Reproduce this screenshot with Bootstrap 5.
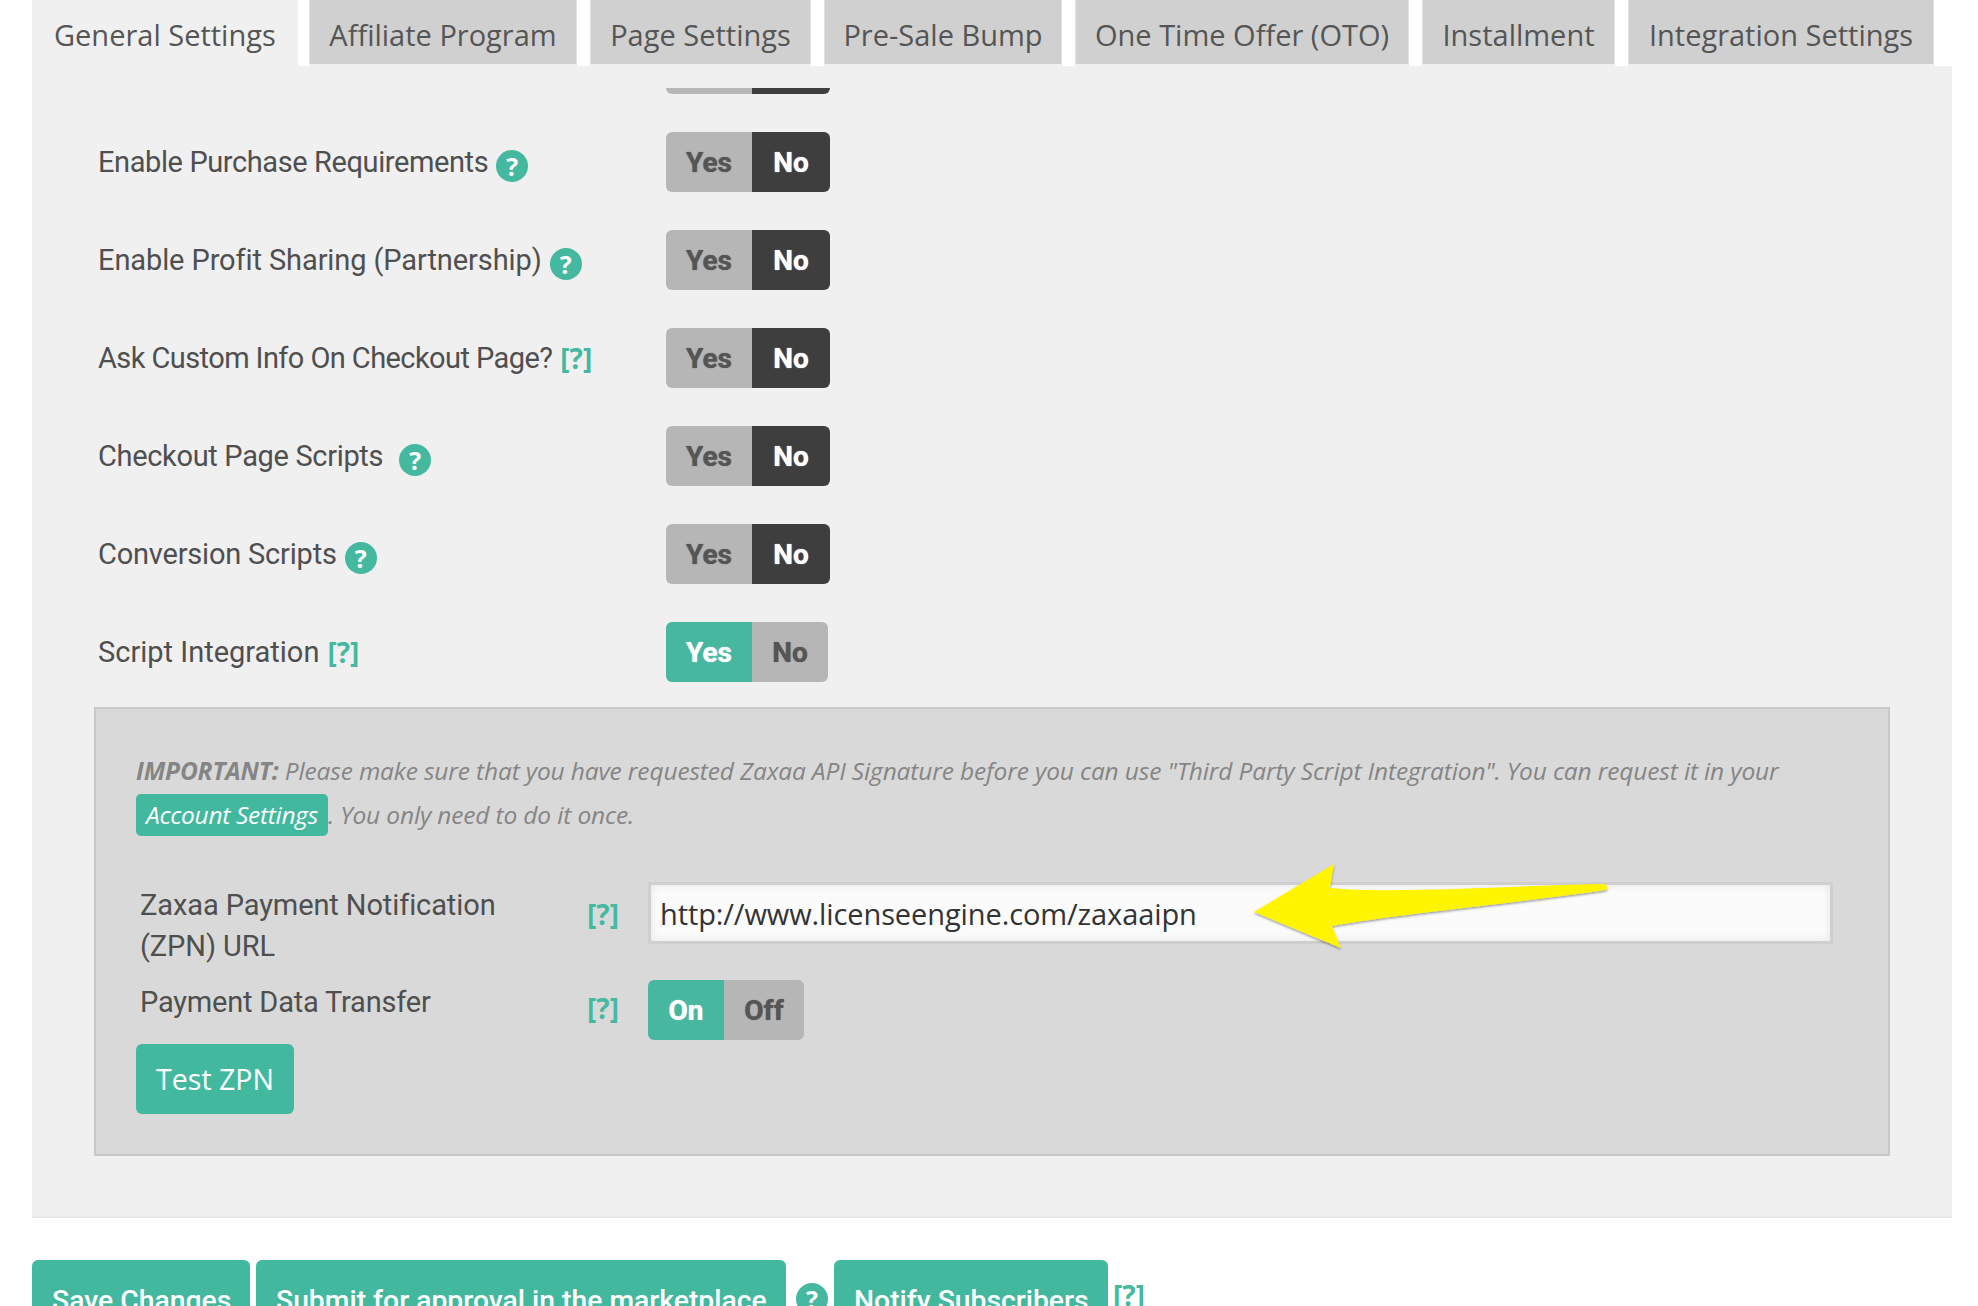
<!DOCTYPE html>
<html lang="en">
<head>
<meta charset="utf-8">
<title>Product settings</title>
<link href="https://cdn.jsdelivr.net/npm/bootstrap@5.3.0/dist/css/bootstrap.min.css" rel="stylesheet">
<style>
html,body{height:1306px;overflow:hidden;background:#fff}
body{font-family:"Roboto","Liberation Sans",sans-serif;color:#4f4f4f}
.sheet{margin-left:32px;width:1920px}
.tabbar{flex-wrap:nowrap;gap:13px;height:66px}
.tabbar .nav-link{height:66px;padding:17px 0 0;text-align:center;background:#d0d0d0;border-bottom:2px solid #f0f0f0;border-left:1px solid #e2e2e2;border-right:1px solid #e2e2e2;color:#555;font:400 29px/36px "Open Sans","Liberation Sans",sans-serif;border-radius:0;white-space:nowrap}
.tabbar .nav-link.active{background:#f0f0f0;border-color:#f0f0f0;padding-left:21px;text-align:left}
.tabbar .nav-item:first-child{margin-right:-2px}
.t0{width:266px}.t1{width:268px}.t2{width:221px}.t3{width:238px}.t4{width:334px}.t5{width:193px}.t6{width:306px}
.pane{background:#f0f0f0;border-bottom:2px solid #e8e8e8;padding:0 0 60px;height:1152px}
.capstrip{height:22px}
.cut{margin-left:634px;width:164px;height:6px;display:flex;border-radius:0 0 6px 6px;overflow:hidden;margin-bottom:38px}
.cut span:first-child{width:86px;background:#b6b6b6}
.cut span:last-child{width:78px;background:#3e3e3e}
.frow{height:60px;margin:0 0 38px 66px;display:flex;align-items:center}
.frow.lastrow{margin-bottom:25px}
.flabel{width:568px;font-size:29px;line-height:40px;display:flex;align-items:center;white-space:nowrap}
.ls1{letter-spacing:-.1px}.ls2{letter-spacing:-.2px}.ls3{letter-spacing:-.33px}.ls4{letter-spacing:-.4px}.ls6{letter-spacing:-.58px}
.tip{width:32px;height:32px;border-radius:50%;background:#45b8a0;color:#fff;font:700 25px/32px "Open Sans",sans-serif;text-align:center;display:inline-block;margin-top:8px;flex:none}
.qlink{color:#45b8a0;font:700 28px/36px "Open Sans",sans-serif;text-decoration:none}
.yn{height:60px;vertical-align:top}
.yn .btn{height:60px;margin:0!important;padding:0;border:0;border-radius:6px;font:700 28px/61px "Roboto",sans-serif;display:block;flex:none;text-shadow:0 0 1px currentColor}
.yn .btn:not(:last-child){border-top-right-radius:0;border-bottom-right-radius:0}
.yn .btn:not(:first-child){border-top-left-radius:0;border-bottom-left-radius:0}
.s-grey{background:#b6b6b6;color:#555}
.s-dark{background:#3e3e3e;color:#fff}
.s-teal{background:#48b79f;color:#fff}
.yn .btn.s-grey:hover{background:#b6b6b6;color:#555}
.w86{width:86px}.w78{width:78px}.w76a{width:76px}.w76{width:76px}.w80{width:80px}
.notebox{margin-left:62px;width:1796px;height:449px;background:#d9d9d9;border:2px solid #c8c8c8;padding:40px 40px 0}
.notetext{font:italic 400 24.5px/44px "Open Sans","Liberation Sans",sans-serif;color:#858585;margin:0 0 45px;white-space:nowrap;letter-spacing:-.15px}
.notetext b{font-weight:700}
.acct{display:inline-block;height:42px;line-height:42px;vertical-align:top;margin-top:1px;width:192px;text-align:center;background:#42b99f;color:#fff;border-radius:5px;text-decoration:none;letter-spacing:-.3px}
.zrow{display:flex;margin-left:4px}
.zrow.tall{height:98px}
.zrow.short{height:64px}
.zlabel{width:447px;font-size:29px;line-height:41px;padding-top:3px;letter-spacing:-.1px}
.zq{width:61px;padding-top:14px}
.short .zq{padding-top:10px}
.short .zlabel{padding-top:2px;letter-spacing:-.2px}
.urlwrap{position:relative;width:1185px;height:62px}
.urlwrap .form-control{height:62px;border:3px solid #cfcfcf;border-radius:0;background:#fbfbfb;box-shadow:inset 0 0 10px rgba(0,0,0,.09);padding:0 9px;font:400 29px/56px "Open Sans","Liberation Sans",sans-serif;letter-spacing:-.1px;color:#333}
.arrow{position:absolute;left:600px;top:-18px;width:366px;height:96px;pointer-events:none;overflow:visible}
.tealbtn{background:#42b99f;color:#fff;border:0;border-radius:6px;font:400 28.5px/36px "Open Sans","Liberation Sans",sans-serif;padding:0;white-space:nowrap}
.tealbtn:hover{background:#42b99f;color:#fff}
.testbtn{width:158px;height:70px}
.actions{margin-top:42px;display:flex;align-items:flex-start}
.actions .tealbtn{height:70px;padding:12px 20px 0;display:block;text-align:left;font:500 28.3px/36px "Roboto",sans-serif}
.b1{width:218px;margin-right:6px}
.b2{width:530px;margin-right:10px}
.b3{width:274px;margin-left:6px;margin-right:5px}
.actions .tip{margin-top:23px}
.actions .qlink{margin-top:17px;line-height:36px}
</style>
</head>
<body>
<div class="sheet">
  <ul class="nav tabbar">
    <li class="nav-item"><a class="nav-link active t0" href="#">General Settings</a></li>
    <li class="nav-item"><a class="nav-link t1" href="#">Affiliate Program</a></li>
    <li class="nav-item"><a class="nav-link t2" href="#">Page Settings</a></li>
    <li class="nav-item"><a class="nav-link t3" href="#">Pre-Sale Bump</a></li>
    <li class="nav-item"><a class="nav-link t4" href="#">One Time Offer (OTO)</a></li>
    <li class="nav-item"><a class="nav-link t5" href="#">Installment</a></li>
    <li class="nav-item"><a class="nav-link t6" href="#">Integration Settings</a></li>
  </ul>
  <div class="pane">
    <div class="capstrip"></div>
    <div class="cut"><span></span><span></span></div>

    <div class="frow">
      <div class="flabel"><span class="ls4">Enable Purchase Requirements</span><span class="tip ms-2">?</span></div>
      <div class="btn-group yn"><span class="btn s-grey w86">Yes</span><span class="btn s-dark w78">No</span></div>
    </div>
    <div class="frow">
      <div class="flabel"><span class="ls1">Enable Profit Sharing (Partnership)</span><span class="tip ms-2">?</span></div>
      <div class="btn-group yn"><span class="btn s-grey w86">Yes</span><span class="btn s-dark w78">No</span></div>
    </div>
    <div class="frow">
      <div class="flabel"><span class="ls6">Ask Custom Info On Checkout Page?</span><a class="qlink ms-2" href="#">[?]</a></div>
      <div class="btn-group yn"><span class="btn s-grey w86">Yes</span><span class="btn s-dark w78">No</span></div>
    </div>
    <div class="frow">
      <div class="flabel"><span class="ls3">Checkout Page Scripts</span><span class="tip ms-3">?</span></div>
      <div class="btn-group yn"><span class="btn s-grey w86">Yes</span><span class="btn s-dark w78">No</span></div>
    </div>
    <div class="frow">
      <div class="flabel"><span class="ls2">Conversion Scripts</span><span class="tip ms-2">?</span></div>
      <div class="btn-group yn"><span class="btn s-grey w86">Yes</span><span class="btn s-dark w78">No</span></div>
    </div>
    <div class="frow lastrow">
      <div class="flabel"><span>Script Integration</span><a class="qlink ms-2" href="#">[?]</a></div>
      <div class="btn-group yn"><span class="btn s-teal w86">Yes</span><span class="btn s-grey w76a">No</span></div>
    </div>

    <div class="notebox">
      <p class="notetext"><b>IMPORTANT:</b> Please make sure that you have requested Zaxaa API Signature before you can use "Third Party Script Integration". You can request it in your<br><a class="acct" href="#">Account Settings</a>. You only need to do it once.</p>
      <div class="zrow tall">
        <div class="zlabel">Zaxaa Payment Notification<br>(ZPN) URL</div>
        <div class="zq"><a class="qlink" href="#">[?]</a></div>
        <div class="urlwrap">
          <input class="form-control" type="text" value="http://www.licenseengine.com/zaxaaipn">
          <svg class="arrow" viewBox="0 0 366 96" aria-hidden="true">
            <defs><filter id="ash" x="-5%" y="-5%" width="110%" height="115%"><feDropShadow dx="0" dy="1.5" stdDeviation="1" flood-color="#000" flood-opacity=".4"/></filter></defs>
            <path filter="url(#ash)" fill="#fff500" d="M6 48 L86 0 L82 24 C140 30 260 22 354 20 C360 20 360 25 358 26 C260 40 150 50 84 62 L93 84 Z"/>
          </svg>
        </div>
      </div>
      <div class="zrow short">
        <div class="zlabel">Payment Data Transfer</div>
        <div class="zq"><a class="qlink" href="#">[?]</a></div>
        <div class="btn-group yn"><span class="btn s-teal w76">On</span><span class="btn s-grey w80">Off</span></div>
      </div>
      <button class="btn tealbtn testbtn" type="button">Test ZPN</button>
    </div>
  </div>
  <div class="actions">
    <button class="btn tealbtn b1" type="button">Save Changes</button>
    <button class="btn tealbtn b2" type="button">Submit for approval in the marketplace</button>
    <span class="tip">?</span>
    <button class="btn tealbtn b3" type="button">Notify Subscribers</button>
    <a class="qlink" href="#">[?]</a>
  </div>
</div>
<script src="https://cdn.jsdelivr.net/npm/bootstrap@5.3.0/dist/js/bootstrap.bundle.min.js"></script>
</body>
</html>
